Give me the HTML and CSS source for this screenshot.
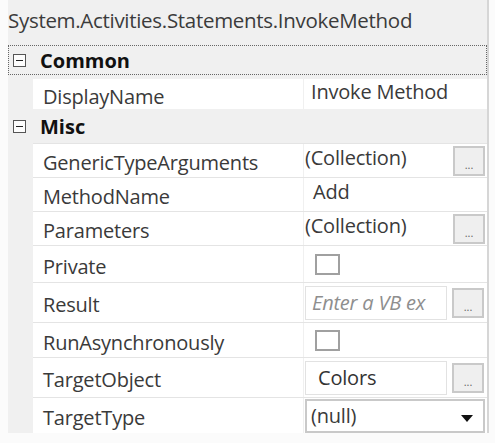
FILE: index.html
```html
<!DOCTYPE html>
<html>
<head lang="en">
    <meta charset="utf-8">
    <title>InvokeMethod Properties</title>
    <link rel="stylesheet" href="styles.css">
</head>
<body>
<div class="grid">
    <div class="title">System.Activities.Statements.InvokeMethod</div>

    <div class="category focused">
        <span class="toggle"></span>
        <span class="catname">Common</span>
    </div>
    <div class="row h30">
        <div class="name">DisplayName</div>
        <div class="value"><span class="plain">Invoke Method</span></div>
    </div>

    <div class="category">
        <span class="toggle"></span>
        <span class="catname">Misc</span>
    </div>
    <div class="row h34">
        <div class="name">GenericTypeArguments</div>
        <div class="value">
            <span class="coll">(Collection)</span>
            <span class="dots">...</span>
        </div>
    </div>
    <div class="row h34">
        <div class="name">MethodName</div>
        <div class="value"><span class="plain add">Add</span></div>
    </div>
    <div class="row h34">
        <div class="name">Parameters</div>
        <div class="value">
            <span class="coll">(Collection)</span>
            <span class="dots">...</span>
        </div>
    </div>
    <div class="row h37">
        <div class="name">Private</div>
        <div class="value"><span class="check"></span></div>
    </div>
    <div class="row h40">
        <div class="name">Result</div>
        <div class="value">
            <span class="box hint">Enter a VB ex</span>
            <span class="dots">...</span>
        </div>
    </div>
    <div class="row h35">
        <div class="name">RunAsynchronously</div>
        <div class="value"><span class="check"></span></div>
    </div>
    <div class="row h40">
        <div class="name">TargetObject</div>
        <div class="value">
            <span class="box obj">Colors</span>
            <span class="dots">...</span>
        </div>
    </div>
    <div class="row h36">
        <div class="name">TargetType</div>
        <div class="value">
            <span class="combo">(null)<i class="arrow"></i></span>
        </div>
    </div>
</div>
</body>
</html>
```

FILE: styles.css
```css
body {
    margin: 0;
    background: #fbfbfb;
    font-family: "Open Sans", "Noto Sans", sans-serif;
    color: #3a3a3a;
}

.grid {
    margin-left: 8px;
    width: 479px;
    height: 433px;
    background: #f0f0f0;
    border-right: 2px solid #d6d6d6;
    box-sizing: content-box;
}

.title {
    height: 45px;
    line-height: 40px;
    font-size: 20.5px;
    padding-left: 0;
    letter-spacing: -0.3px;
    color: #3b3b3b;
    white-space: nowrap;
}

.category {
    display: flex;
    align-items: center;
    height: 34px;
    box-sizing: border-box;
    font-size: 20px;
    font-weight: bold;
    color: #111;
}

.category.focused {
    height: 30px;
    margin-bottom: 4px;
    border: 1px dotted #666;
}

.toggle {
    width: 11px;
    height: 11px;
    margin: 0 14px 0 5px;
    border: 1px solid #555;
    background: #fdfdfd;
    position: relative;
}

.toggle::after {
    content: "";
    position: absolute;
    left: 2px;
    right: 2px;
    top: 5px;
    height: 1px;
    background: #222;
}

.category.focused .toggle {
    margin-left: 4px;
}

.row {
    display: grid;
    grid-template-columns: 271px 181px;
    margin-left: 25px;
    background: #fff;
    font-size: 20px;
    letter-spacing: -0.2px;
    border-top: 1px solid #e4e4e4;
    box-sizing: border-box;
    white-space: nowrap;
}

.row.h30 { height: 30px; border-top: none; }
.row.h34 { height: 34px; }
.row.h35 { height: 35px; }
.row.h36 { height: 36px; }
.row.h37 { height: 37px; }
.row.h40 { height: 40px; }

.name {
    display: flex;
    align-items: center;
    padding-left: 10px;
    padding-top: 4px;
    border-right: 1px solid #f0f0f0;
}

.value {
    display: flex;
    align-items: center;
    padding-left: 1px;
}

.plain {
    padding-left: 6px;
    margin-top: -6px;
}

.plain.add {
    padding-left: 8px;
}

.coll {
    flex: 1;
    margin-top: -6px;
}

.dots {
    width: 32px;
    height: 30px;
    box-sizing: border-box;
    border: 2px solid #c9c9c9;
    background: #efefef;
    font-size: 11px;
    color: #666;
    text-align: center;
    line-height: 34px;
    letter-spacing: 0;
}

.check {
    width: 25px;
    height: 21px;
    margin-left: 10px;
    box-sizing: border-box;
    border: 2px solid #a0a0a0;
    background: #fff;
}

.box {
    width: 142px;
    height: 34px;
    margin-right: 5px;
    box-sizing: border-box;
    border: 1px solid #e2e2e2;
    display: flex;
    align-items: center;
    overflow: hidden;
}

.box.hint {
    font-style: italic;
    color: #8e8e8e;
    padding-left: 6px;
}

.box.obj {
    padding-left: 12px;
    color: #333;
}

.combo {
    width: 180px;
    height: 34px;
    box-sizing: border-box;
    border: 2px solid #c9c9c9;
    display: flex;
    align-items: center;
    padding-left: 4px;
    position: relative;
}

.arrow {
    position: absolute;
    right: 10px;
    top: 14px;
    width: 0;
    height: 0;
    border-left: 6px solid transparent;
    border-right: 6px solid transparent;
    border-top: 7px solid #111;
}
```
